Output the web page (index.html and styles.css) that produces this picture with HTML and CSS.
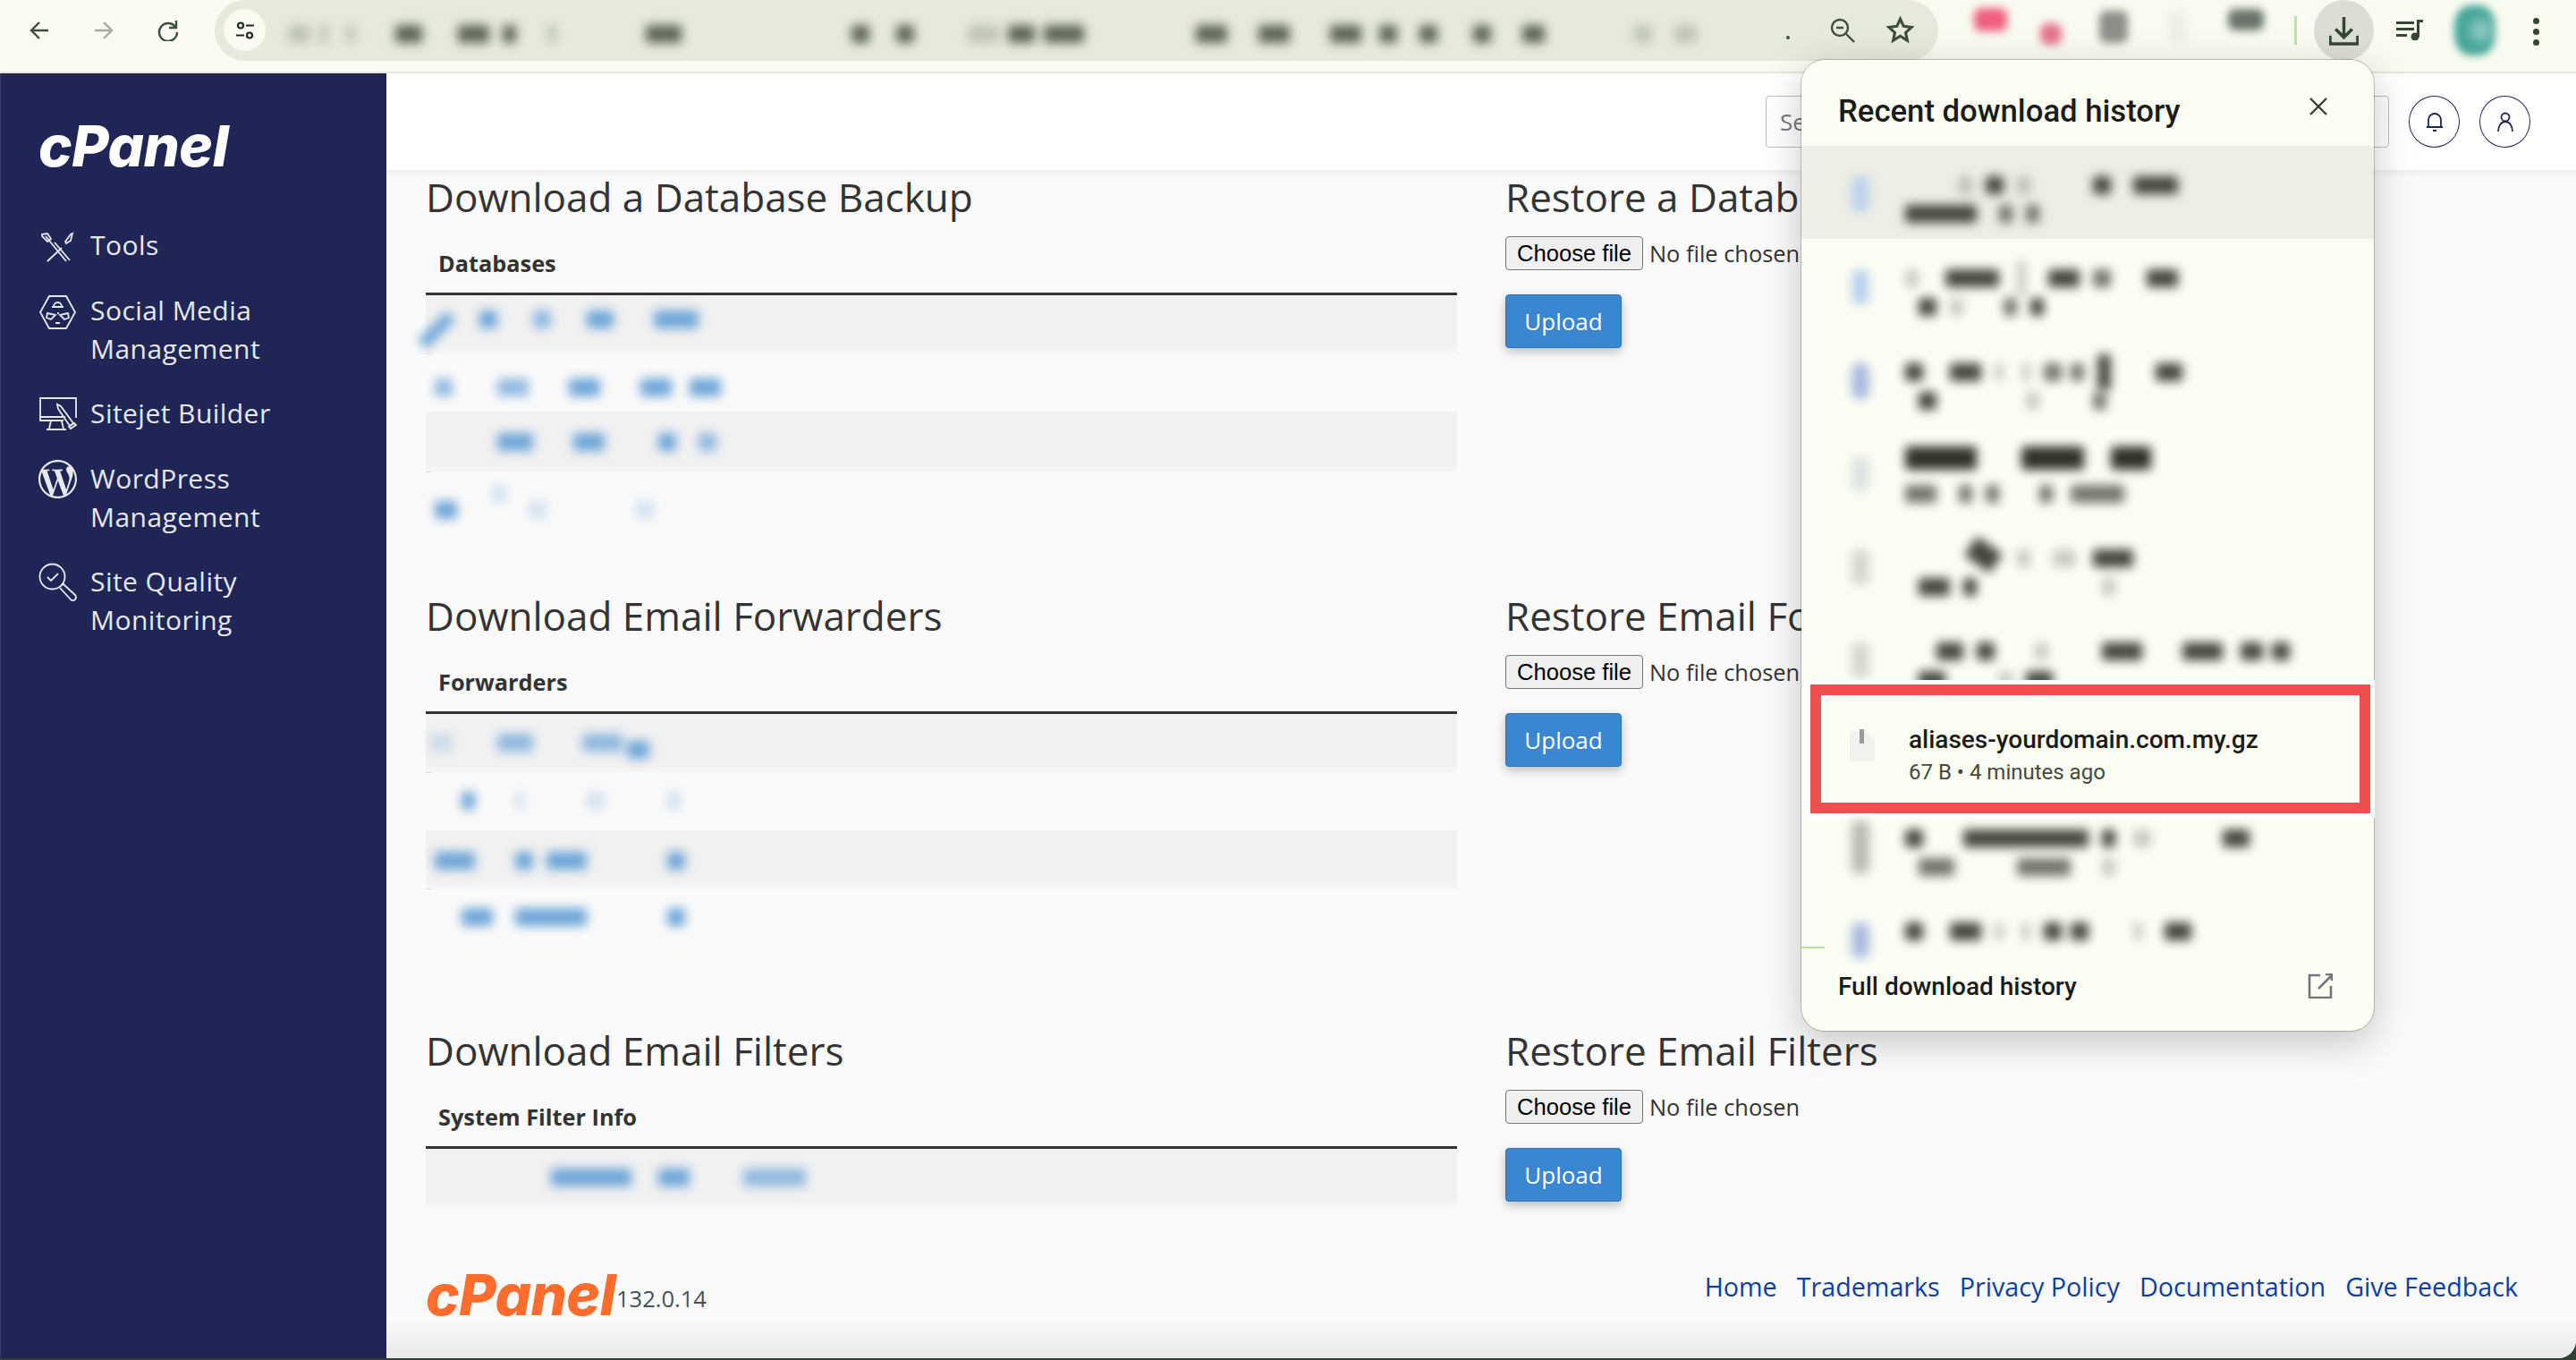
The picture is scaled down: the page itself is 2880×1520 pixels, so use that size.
FILE: index.html
```html
<!DOCTYPE html>
<html lang="en">
<head>
<meta charset="utf-8">
<title>cPanel - Backups</title>
<link rel="stylesheet" href="styles.css">
</head>
<body>
<header class="chrome">
  <svg class="nav-ico" viewBox="0 0 24 24"><path d="M22 12H3M12 3l-9 9 9 9"/></svg>
  <svg class="nav-ico off" viewBox="0 0 24 24"><path d="M2 12h19M12 3l9 9-9 9"/></svg>
  <svg class="nav-ico" viewBox="0 0 24 24"><path d="M20 8a10 10 0 1 0 2 6M21 1v8h-8"/></svg>
  <div class="omni">
    <span class="site-info"><svg viewBox="0 0 24 24"><circle cx="7" cy="6.500" r="3"/><path d="M13 6.500h9M2 17.500h9"/><circle cx="17" cy="17.500" r="3"/></svg></span>
    <div class="blobs url">
      <i class="m25 w25 ft"></i><i class="m10 w10 ft"></i><i class="m20 w10 ft"></i><i class="m45 w30"></i><i class="m40 w35"></i><i class="m15 w15"></i><i class="m35 w10 ft"></i><i class="m100 w40"></i>
      <i class="m190 w20"></i><i class="m30 w20"></i><i class="m60 w35 ft"></i><i class="m10 w30"></i><i class="m10 w45"></i><i class="m125 w35"></i><i class="m35 w35"></i><i class="m45 w35"></i><i class="m20 w20"></i><i class="m25 w20"></i><i class="m40 w20"></i><i class="m35 w25"></i><i class="m100 w20 ft"></i><i class="m25 w25 ft"></i>
    </div>
    <span class="url-dot"></span>
    <svg class="omni-ico" viewBox="0 0 28 28"><circle cx="11" cy="11" r="9"/><path d="M7 11h8M18 18l9 9"/></svg>
    <svg class="omni-ico star" viewBox="0 0 24 24"><path d="M12 2.500l2.900 6.300 6.900.8-5.100 4.700 1.400 6.800L12 17.200l-6.100 3.900 1.400-6.800L2.200 9.600l6.900-.8z"/></svg>
  </div>
  <div class="exts">
    <span class="ext e1"></span><span class="ext e2"></span><span class="ext e3"></span><span class="ext e4"></span><span class="ext e5"></span>
  </div>
  <span class="green-bar"></span>
  <span class="dl-btn"><svg viewBox="0 0 32 32"><path d="M16 1v21M7 14l9 9 9-9M1 21v9h30v-9"/></svg></span>
  <svg class="music" viewBox="0 0 32 24"><path d="M1 3h20v3H1zM1 10h20v3H1zM1 17h12v3H1z"/><path d="M24 20V1h7v3h-4v16z"/><circle cx="22" cy="20" r="4.500"/></svg>
  <span class="avatar"></span>
  <span class="dots"><i></i><i></i><i></i></span>
</header>

<div class="window">
  <aside class="sidebar">
    <div class="logo logo-side">cPanel</div>
    <nav class="menu">
      <a class="item"><svg viewBox="0 0 43 43"><path d="M8 11l23 28M35 38L18 18M30 17l6-8 2-1-2 8-5 3zM26 24l-16 15M4 9l6-1 4 6-4 3-6-6z" /></svg><span>Tools</span></a>
      <a class="item"><svg viewBox="0 0 43 43"><path d="M12 5h19l10 18-10 18H12L2 23z"/><path d="M17 17a4.500 5 0 0 1 9 0zM15 17h13M21 24h2M10 24l9 2-5 5-5-2zM33 24l-9 2 5 5 5-2zM19 35h5"/></svg><span>Social Media<br>Management</span></a>
      <a class="item"><svg viewBox="0 0 43 43"><path d="M30 25h-28V4h40v22M2 25v4h26M14 29l-2 9M26 30l2 8M9 39h22"/><path d="M22 16l-1-5 4 2 14 19-4 3zM34 36l6-4 2 2-6 4z"/></svg><span>Sitejet Builder</span></a>
      <a class="item"><svg class="solid" viewBox="0 0 24 24"><path d="M21.469 6.825c.84 1.537 1.318 3.3 1.318 5.175 0 3.979-2.156 7.456-5.363 9.325l3.295-9.527c.615-1.54.82-2.771.82-3.864 0-.405-.026-.78-.07-1.11m-7.981.105c.647-.03 1.232-.105 1.232-.105.582-.075.514-.93-.067-.899 0 0-1.755.135-2.88.135-1.064 0-2.85-.15-2.85-.15-.585-.03-.661.855-.075.885 0 0 .54.061 1.125.09l1.68 4.605-2.37 7.08L5.354 6.9c.649-.03 1.234-.1 1.234-.1.585-.075.516-.93-.065-.896 0 0-1.746.138-2.874.138-.2 0-.438-.008-.69-.015C4.911 3.15 8.235 1.215 12 1.215c2.809 0 5.365 1.072 7.286 2.833-.046-.003-.091-.009-.141-.009-1.06 0-1.812.923-1.812 1.914 0 .89.513 1.643 1.06 2.531.411.72.89 1.643.89 2.977 0 .915-.354 1.994-.821 3.479l-1.075 3.585-3.9-11.61.001.014zM12 22.784c-1.059 0-2.081-.153-3.048-.437l3.237-9.406 3.315 9.087c.024.053.05.101.078.149-1.12.393-2.325.609-3.582.609M1.211 12c0-1.564.336-3.05.935-4.39L7.29 21.709C3.694 19.96 1.212 16.271 1.211 12M12 0C5.385 0 0 5.385 0 12s5.385 12 12 12 12-5.385 12-12S18.615 0 12 0"/></svg><span>WordPress<br>Management</span></a>
      <a class="item"><svg viewBox="0 0 43 43"><circle cx="15.500" cy="15.500" r="14"/><path d="M10 16l4 4 8-8"/><path d="M25.500 25.500l3-3M28 24l13 12a3 3 0 0 1-5 5L24 28" /></svg><span>Site Quality<br>Monitoring</span></a>
    </nav>
  </aside>

  <main class="main">
    <div class="topbar">
      <div class="search">Se</div>
      <span class="round"><svg viewBox="0 0 24 24"><path d="M5 18V10a7 7 0 0 1 14 0v8zM3 18h18M10 22h4"/></svg></span>
      <span class="round"><svg viewBox="0 0 24 24"><circle cx="12" cy="7" r="4.500"/><path d="M4 23c0-6 3-11 8-11s8 5 8 11"/></svg></span>
    </div>

    <section class="sect">
      <div class="col-left">
        <h2>Download a Database Backup</h2>
        <div class="thead">Databases</div>
        <div class="trow odd p18"><div class="blobs blue"><i class="m5 w30 diag"></i><i class="m25 w20"></i><i class="m40 w20 ft2"></i><i class="m40 w30"></i><i class="m45 w50"></i></div></div>
        <div class="trow p28"><div class="blobs blue"><i class="m10 w20 ft2"></i><i class="m50 w35 ft2"></i><i class="m45 w35"></i><i class="m45 w35"></i><i class="m20 w35"></i></div></div>
        <div class="trow odd tall-row p24"><div class="blobs blue"><i class="m80 w40"></i><i class="m45 w35"></i><i class="m60 w20"></i><i class="m25 w20 ft2"></i></div></div>
        <div class="trow p34"><div class="blobs blue"><i class="m10 w25"></i><i class="m40 w15 ft up"></i><i class="m25 w20 ft"></i><i class="m100 w20 ft"></i></div></div>
      </div>
      <div class="col-right">
        <h2 class="nowrap">Restore a Datab</h2>
        <div class="file-row"><button class="choose">Choose file</button><span class="nofile">No file chosen</span></div>
        <button class="upload">Upload</button>
      </div>
    </section>

    <section class="sect s2">
      <div class="col-left">
        <h2>Download Email Forwarders</h2>
        <div class="thead">Forwarders</div>
        <div class="trow odd"><div class="blobs blue"><i class="m5 w25 ft"></i><i class="m50 w40 ft2"></i><i class="m55 w45 ft2"></i><i class="m5 w25 down"></i></div></div>
        <div class="trow"><div class="blobs blue"><i class="m40 w15"></i><i class="m45 w10 ft"></i><i class="m70 w20 ft"></i><i class="m70 w15 ft"></i></div></div>
        <div class="trow odd p24"><div class="blobs blue"><i class="m10 w45"></i><i class="m45 w20"></i><i class="m15 w45"></i><i class="m90 w20"></i></div></div>
        <div class="trow"><div class="blobs blue"><i class="m40 w35"></i><i class="m25 w80"></i><i class="m90 w20"></i></div></div>
      </div>
      <div class="col-right">
        <h2 class="nowrap">Restore Email Fo</h2>
        <div class="file-row"><button class="choose">Choose file</button><span class="nofile">No file chosen</span></div>
        <button class="upload">Upload</button>
      </div>
    </section>

    <section class="sect s3">
      <div class="col-left">
        <h2>Download Email Filters</h2>
        <div class="thead">System Filter Info</div>
        <div class="trow odd"><div class="blobs blue"><i class="m140 w90"></i><i class="m30 w35"></i><i class="m60 w70 ft2"></i></div></div>
      </div>
      <div class="col-right">
        <h2>Restore Email Filters</h2>
        <div class="file-row"><button class="choose">Choose file</button><span class="nofile">No file chosen</span></div>
        <button class="upload">Upload</button>
      </div>
    </section>

    <footer class="foot">
      <div class="brand"><div class="logo logo-foot">cPanel</div><span class="ver">132.0.14</span></div>
      <nav class="links"><a>Home</a><a>Trademarks</a><a>Privacy Policy</a><a>Documentation</a><a>Give Feedback</a></nav>
    </footer>
  </main>
</div>

<div class="popup">
  <div class="pop-head"><span>Recent download history</span><svg viewBox="0 0 20 20"><path d="M1 1l18 18M19 1L1 19"/></svg></div>
  <div class="pop-list">
    <div class="dl hover"><span class="fi blue-fi"></span><div class="lines">
      <div class="blobs grey"><i class="m60 w15 ft"></i><i class="m15 w20"></i><i class="m15 w15 ft"></i><i class="m70 w20"></i><i class="m25 w50"></i></div>
      <div class="blobs grey"><i class="w80"></i><i class="m25 w15 ft2"></i><i class="m15 w15 ft2"></i></div></div></div>
    <div class="dl"><span class="fi blue-fi"></span><div class="lines">
      <div class="blobs grey"><i class="w15 ft"></i><i class="m30 w60"></i><i class="m20 w10 ft tall"></i><i class="m25 w35"></i><i class="m15 w20 ft2"></i><i class="m40 w35"></i></div>
      <div class="blobs grey"><i class="m15 w20"></i><i class="m15 w15 ft"></i><i class="m45 w15 ft2"></i><i class="m15 w15"></i></div></div></div>
    <div class="dl"><span class="fi blue-fi2"></span><div class="lines">
      <div class="blobs grey"><i class="w20"></i><i class="m30 w35"></i><i class="m15 w10 ft"></i><i class="m20 w10 ft"></i><i class="m15 w20 ft2"></i><i class="m10 w15 ft2"></i><i class="m15 w15 tall"></i><i class="m50 w30"></i></div>
      <div class="blobs grey"><i class="m15 w20"></i><i class="m100 w15 ft"></i><i class="m60 w15 ft2"></i></div></div></div>
    <div class="dl"><span class="fi pale-fi"></span><div class="lines">
      <div class="blobs grey lift"><i class="w80 dark"></i><i class="m50 w70 dark"></i><i class="m30 w45 dark"></i></div>
      <div class="blobs grey"><i class="w35 ft2"></i><i class="m25 w15 ft2"></i><i class="m15 w15 ft2"></i><i class="m45 w15 ft2"></i><i class="m20 w60 ft2"></i></div></div></div>
    <div class="dl"><span class="fi gray-fi"></span><div class="lines">
      <div class="blobs grey"><i class="m70 w35 tilt"></i><i class="m20 w15 ft"></i><i class="m25 w25 ft"></i><i class="m20 w45"></i></div>
      <div class="blobs grey"><i class="m15 w35"></i><i class="m15 w15"></i><i class="m140 w15 ft"></i></div></div></div>
    <div class="dl"><span class="fi gray-fi"></span><div class="lines">
      <div class="blobs grey"><i class="m35 w30"></i><i class="m15 w20"></i><i class="m45 w15 ft"></i><i class="m60 w45"></i><i class="m45 w45"></i><i class="m20 w25"></i><i class="m10 w20"></i></div>
      <div class="blobs grey"><i class="m15 w30"></i><i class="m60 w15 ft"></i><i class="m15 w30"></i></div></div></div>
    <div class="dl marked">
      <svg class="file-ico" viewBox="0 0 30 38"><path class="sheet" d="M1 2h18l10 10v24H1z"/><path class="zip" d="M12 0h5v16h-5z"/></svg>
      <div class="name-block"><div class="fname">aliases-yourdomain.com.my.gz</div><div class="fmeta">67 B • 4 minutes ago</div></div>
      <span class="redbox"></span>
    </div>
    <div class="dl"><span class="fi gray-tall"></span><div class="lines">
      <div class="blobs grey"><i class="w20"></i><i class="m45 w140"></i><i class="m15 w15"></i><i class="m20 w20 ft"></i><i class="m80 w30"></i></div>
      <div class="blobs grey"><i class="m15 w40 ft2"></i><i class="m70 w60 ft2"></i><i class="m35 w15 ft"></i></div></div></div>
    <div class="dl"><span class="fi blue-fi2"></span><div class="lines">
      <div class="blobs grey"><i class="w20"></i><i class="m30 w35"></i><i class="m15 w10 ft"></i><i class="m20 w10 ft"></i><i class="m15 w20"></i><i class="m10 w20"></i><i class="m50 w10 ft"></i><i class="m25 w30"></i></div></div></div>
    <span class="green-line"></span>
  </div>
  <div class="pop-foot"><span>Full download history</span><svg viewBox="0 0 28 28"><path d="M14 2H2v25h24V14M12 17L26 3M20 1h7v7"/></svg></div>
</div>
</body>
</html>
```
FILE: styles.css
```css
* { box-sizing: border-box; }
html, body { margin: 0; padding: 0; }
body {
  position: relative;
  width: 2880px;
  height: 1520px;
  overflow: hidden;
  display: flex;
  flex-direction: column;
  background: #2e3f35;
  font-family: "Open Sans", "Liberation Sans", sans-serif;
  color: #333;
}

/* browser toolbar */
.chrome {
  flex: none;
  height: 82px;
  display: flex;
  align-items: flex-start;
  background: #f9fbf0;
  border-bottom: 2px solid #e3e6d8;
  padding-left: 32px;
}
.nav-ico {
  flex: none;
  width: 24px;
  height: 24px;
  margin: 22px 48px 0 0;
  fill: none;
  stroke: #3f4d3c;
  stroke-width: 2.4;
}
.nav-ico.off { stroke: #a8aca0; }
.nav-ico:nth-of-type(3) { margin-right: 0; }
.omni {
  flex: none;
  position: relative;
  width: 1927px;
  height: 68px;
  margin-left: 40px;
  display: flex;
  align-items: flex-start;
  background: #e5eadc;
  border-radius: 34px;
}
.site-info {
  flex: none;
  width: 47px;
  height: 47px;
  margin: 10px 0 0 10px;
  border-radius: 50%;
  background: #f9fbf0;
  display: flex;
  align-items: center;
  justify-content: center;
}
.site-info svg { width: 24px; height: 24px; fill: none; stroke: #1f2a1e; stroke-width: 2.2; }
.url { flex: 1; margin-top: 28px; height: 20px; filter: blur(6px); }
.url i { background: #5f6558; height: 20px; }
.url-dot { flex: none; width: 4px; height: 4px; margin: 40px 45px 0 0; background: #3f4d3c; border-radius: 50%; }
.omni-ico {
  flex: none;
  width: 28px;
  height: 28px;
  margin: 20px 35px 0 0;
  fill: none;
  stroke: #3f4d3c;
  stroke-width: 2.4;
}
.omni-ico.star { width: 31px; height: 31px; margin: 18px 27px 0 0; }
.exts { flex: none; width: 396px; position: relative; display: flex; align-items: flex-start; padding-left: 40px; }
.ext { flex: none; display: block; filter: blur(5px); border-radius: 8px; }
.e1 { width: 37px; height: 26px; margin-top: 9px; background: #f0607e; }
.e2 { width: 24px; height: 24px; margin: 26px 0 0 37px; background: #e4748e; }
.e3 { width: 32px; height: 36px; margin: 12px 0 0 42px; background: #8c8f88; }
.e4 { width: 20px; height: 36px; margin: 12px 0 0 45px; background: #ecefe4; }
.e5 { width: 40px; height: 24px; margin: 10px 0 0 47px; background: #69746a; }
.green-bar { flex: none; width: 3px; height: 32px; margin: 18px 0 0 2px; background: #b5e8a3; }
.dl-btn {
  flex: none;
  width: 67px;
  height: 68px;
  margin-left: 19px;
  border-radius: 50%;
  background: #dcded5;
  display: flex;
  align-items: center;
  justify-content: center;
}
.dl-btn svg { width: 33px; height: 33px; fill: none; stroke: #354632; stroke-width: 3.400; }
.music { flex: none; width: 32px; height: 24px; margin: 21px 0 0 24px; fill: #354632; }
.avatar {
  flex: none;
  width: 46px;
  height: 56px;
  margin: 6px 0 0 34px;
  border-radius: 40%;
  background: radial-gradient(circle at 65% 50%, #9fd0c8 0, #4aa89c 45%, #3f9f92 100%);
  filter: blur(4px);
}
.dots { flex: none; display: flex; flex-direction: column; gap: 5px; margin: 20px 0 0 42px; }
.dots i { display: block; width: 7px; height: 7px; border-radius: 50%; background: #354632; }

/* window */
.window {
  flex: none;
  height: 1436px;
  display: flex;
  border-bottom-right-radius: 20px;
  overflow: hidden;
}
.sidebar {
  flex: none;
  width: 432px;
  background: #1f2655;
  border-left: 1px solid #353b69;
  padding: 58px 0 0 42px;
  color: #e6e8ee;
}
.logo {
  font-family: "Inter", "Open Sans", sans-serif;
  font-weight: 800;
  font-style: italic;
  font-size: 63.500px;
  letter-spacing: -.5px;
  line-height: 45px;
  height: 45px;
  width: 213px;
  white-space: nowrap;
}
.logo-side { color: #fff; }
.logo-foot { color: #ff6c2c; }
.menu { margin-top: 67px; display: flex; flex-direction: column; gap: 29px; }
.item { display: flex; gap: 15px; font-size: 30px; line-height: 43px; letter-spacing: .45px; }
.item svg {
  flex: none;
  width: 43px;
  height: 43px;
  margin-top: 1px;
  fill: none;
  stroke: #e6e8ee;
  stroke-width: 1.800;
}
.item svg.solid { fill: #e6e8ee; stroke: none; }

.main {
  flex: 1;
  min-width: 0;
  background: #fafafa;
  display: flex;
  flex-direction: column;
}
.topbar {
  flex: none;
  height: 108px;
  background: #fff;
  box-shadow: 0 2px 8px rgba(0, 0, 0, .08);
  display: flex;
  align-items: center;
  justify-content: flex-end;
  padding-right: 51px;
  gap: 22px;
}
.search {
  width: 697px;
  height: 58px;
  padding-left: 15px;
  border: 1px solid #b9bdd0;
  border-radius: 4px;
  font-size: 26px;
  line-height: 56px;
  color: #777;
}
.round {
  flex: none;
  width: 57px;
  height: 58px;
  border: 1.500px solid #1f2655;
  border-radius: 50%;
  display: flex;
  align-items: center;
  justify-content: center;
}
.round svg { width: 24px; height: 24px; fill: none; stroke: #1f2655; stroke-width: 1.800; }

/* sections */
.sect {
  flex: none;
  display: grid;
  grid-template-columns: 1153px 1fr;
  column-gap: 54px;
  padding-left: 44px;
}
.sect.s2 { margin-top: 66px; }
.sect.s3 { margin-top: 86px; }
h2 { margin: 0; font-size: 44px; font-weight: 400; line-height: 60px; color: #333; }
.nowrap { white-space: nowrap; }
.thead {
  height: 80px;
  padding: 22px 0 0 14px;
  font-size: 25.300px;
  font-weight: 700;
  line-height: 44px;
  border-bottom: 3px solid #333;
}
.trow {
  height: 65px;
  padding-top: 22px;
  background: linear-gradient(#dddddd, #dddddd) no-repeat 0 0 / 7px 1px;
}
.trow.odd { background: linear-gradient(to bottom, #f1f1f1 0, #f1f1f1 85%, #f6f6f6 100%); }
.trow.tall-row { height: 67px; }
.trow.p18 { padding-top: 17px; }
.trow.p24 { padding-top: 24px; }
.trow.p28 { padding-top: 28px; }
.trow.p34 { padding-top: 33px; }

.blobs { display: flex; align-items: center; height: 20px; filter: blur(6px); }
.blobs.lift { transform: translateY(-8px); }
.blobs i { display: block; flex: none; height: 20px; border-radius: 3px; }
.blue i { background: #6fa6d8; }
.grey i { background: #45483e; }
.blobs i.ft { opacity: .28; }
.blobs i.ft2 { opacity: .75; }
.blobs i.tall { height: 40px; }
.blobs i.dark { height: 26px; background: #2f3229; }
.blobs i.diag { width: 14px; height: 46px; margin-right: 16px; transform: translateY(12px) rotate(45deg); }
.blobs i.tilt { height: 26px; transform: translateY(-4px) rotate(35deg); }
.blobs i.up { transform: translateY(-18px); }
.blobs i.down { transform: translateY(8px); }

.w10 { width: 10px; } .w15 { width: 15px; } .w20 { width: 20px; } .w25 { width: 25px; }
.w30 { width: 30px; } .w35 { width: 35px; } .w40 { width: 40px; } .w45 { width: 45px; }
.w50 { width: 50px; } .w60 { width: 60px; } .w70 { width: 70px; } .w80 { width: 80px; }
.w90 { width: 90px; } .w140 { width: 140px; }
.m5 { margin-left: 5px; } .m10 { margin-left: 10px; } .m15 { margin-left: 15px; } .m20 { margin-left: 20px; }
.m25 { margin-left: 25px; } .m30 { margin-left: 30px; } .m35 { margin-left: 35px; } .m40 { margin-left: 40px; }
.m45 { margin-left: 45px; } .m50 { margin-left: 50px; } .m55 { margin-left: 55px; } .m60 { margin-left: 60px; }
.m70 { margin-left: 70px; } .m80 { margin-left: 80px; } .m90 { margin-left: 90px; } .m100 { margin-left: 100px; }
.m110 { margin-left: 110px; } .m125 { margin-left: 125px; } .m140 { margin-left: 140px; } .m190 { margin-left: 190px; }

.file-row { display: flex; align-items: center; margin-top: 14px; height: 38px; }
.choose {
  width: 154px;
  height: 38px;
  padding: 0;
  background: #efefef;
  border: 1px solid #767676;
  border-radius: 4px;
  font-family: "Liberation Sans", Arial, sans-serif;
  font-size: 25.600px;
  color: #000;
}
.nofile { margin-left: 7px; font-size: 25.400px; white-space: nowrap; color: #333; }
.upload {
  display: block;
  width: 130px;
  height: 60px;
  margin-top: 27px;
  padding: 0;
  background: #3a86d1;
  border: 1px solid #2f74b8;
  border-radius: 4px;
  box-shadow: 0 4px 12px rgba(0, 0, 0, .25);
  font-family: "Open Sans", sans-serif;
  font-size: 26px;
  color: #fff;
}

/* footer */
.foot {
  flex: 1;
  margin-top: 75px;
  padding: 0 65px 0 44px;
  display: flex;
  justify-content: space-between;
  align-items: flex-start;
  background: linear-gradient(to bottom, #fafafa 0, #fafafa 55%, #e8e8e8 100%);
}
.brand { display: flex; align-items: flex-end; gap: 0; }
.ver { font-size: 25.500px; line-height: 36px; color: #43515f; }
.links { display: flex; gap: 22px; margin-top: -6px; font-size: 28.700px; line-height: 40px; color: #0b3fa5; }

/* downloads popup */
.popup {
  position: absolute;
  left: 2014px;
  top: 67px;
  width: 640px;
  height: 1085px;
  background: #fcfef3;
  border-radius: 26px;
  box-shadow: 0 0 0 1px rgba(0, 0, 0, .2), 0 12px 44px rgba(0, 0, 0, .22);
  display: flex;
  flex-direction: column;
  overflow: visible;
  font-family: "Roboto", "Inter", sans-serif;
  color: #1b1c17;
}
.pop-head {
  flex: none;
  height: 96px;
  padding: 18px 52px 0 41px;
  display: flex;
  align-items: center;
  justify-content: space-between;
  font-size: 34.700px;
  font-weight: 500;
}
.pop-head svg { width: 20px; height: 20px; margin-top: -10px; fill: none; stroke: #3a3c35; stroke-width: 2.400; }
.pop-list { flex: none; height: 905px; position: relative; }
.dl { height: 104.250px; display: flex; align-items: flex-start; padding: 34px 0 0 56px; }
.dl.hover { background: #edeee6; }
.fi { flex: none; display: block; width: 20px; height: 40px; margin-right: 40px; border-radius: 8px; filter: blur(6px); }
.blue-fi { background: #bcd2ee; }
.blue-fi2 { background: #a9b9e0; }
.pale-fi { background: #dde3e2; }
.gray-fi { background: #d4d6d0; }
.gray-tall { background: #b8bab4; height: 60px; margin-top: -10px; }
.lines { display: flex; flex-direction: column; gap: 12px; }
.dl.marked { position: relative; padding: 20px 0 0 53px; }
.file-ico { flex: none; width: 30px; height: 38px; margin-top: 6px; }
.sheet { fill: #f1f2ee; }
.zip { fill: #9a9c98; }
.name-block { margin-left: 37px; }
.fname { font-size: 28px; line-height: 36px; font-weight: 500; white-space: nowrap; }
.fmeta { font-size: 24px; line-height: 32px; margin-top: 2px; color: #46493f; white-space: nowrap; }
.redbox {
  position: absolute;
  left: 10px;
  top: -24px;
  width: 626px;
  height: 144px;
  border: 12px solid #ef4f4f;
  box-shadow: 0 0 0 5px #fff, inset 0 0 0 5px #fdfef8;
}
.green-line { position: absolute; left: 0; top: 895px; width: 26px; height: 2px; background: #b5e8a3; }
.pop-foot {
  flex: none;
  height: 84px;
  padding: 0 46px 16px 41px;
  display: flex;
  align-items: center;
  justify-content: space-between;
  font-size: 28px;
  font-weight: 500;
}
.pop-foot svg { width: 28px; height: 28px; fill: none; stroke: #72767c; stroke-width: 2.600; }
```
